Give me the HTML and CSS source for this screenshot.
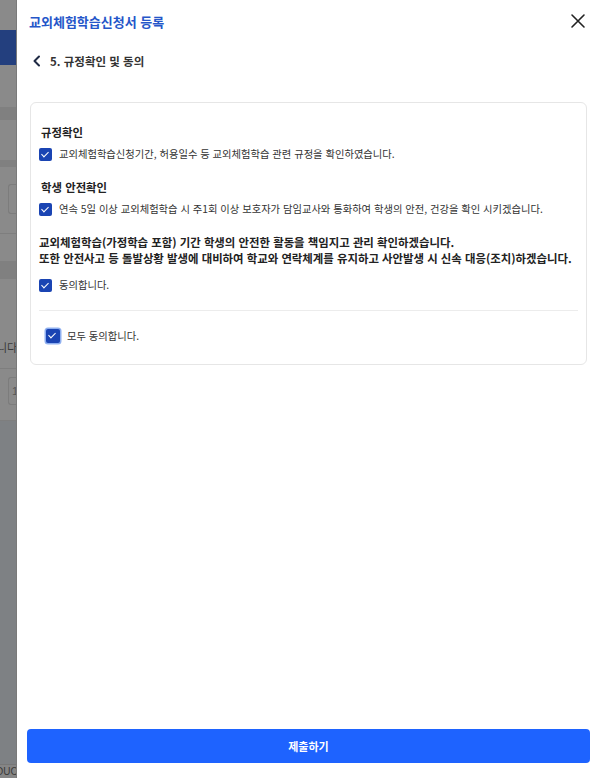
FILE: index.html
```html
<!DOCTYPE html>
<html lang="ko">
<head>
  <meta charset="UTF-8"/>
  <meta name="viewport" content="width=device-width, initial-scale=1"/>
  <title>교외체험학습신청서 등록</title>
  <link rel="stylesheet" href="styles.css">
</head>
<body>
  <div class="screen">
    <!-- dimmed page behind the drawer -->
    <div class="backdrop">
      <div class="bd-top"></div>
      <div class="bd-nav"></div>
      <div class="bd-row"></div>
      <div class="bd-band"></div>
      <div class="bd-row short"></div>
      <div class="bd-band thin"></div>
      <div class="bd-field"><span class="bd-input"></span></div>
      <div class="bd-gap"></div>
      <div class="bd-band tall"></div>
      <div class="bd-text">니다.</div>
      <div class="bd-field low"><span class="bd-input">10</span></div>
      <div class="bd-fill"></div>
      <div class="bd-foot">DUC</div>
    </div>

    <div class="drawer">
      <header class="drawer-head">
        <h1 class="drawer-title">교외체험학습신청서 등록</h1>
        <button class="icon-btn" aria-label="닫기">
          <svg width="16" height="16" viewBox="0 0 16 16"><path d="M2 2L14 14M14 2L2 14" stroke="#222" stroke-width="1.6" stroke-linecap="round"/></svg>
        </button>
      </header>

      <div class="step">
        <svg class="back" width="10" height="12" viewBox="0 0 10 12"><path d="M7 1.5L2.5 6L7 10.5" fill="none" stroke="#1f2a44" stroke-width="2" stroke-linecap="round" stroke-linejoin="round"/></svg>
        <span>5. 규정확인 및 동의</span>
      </div>

      <section class="card">
        <div class="group">
          <h2 class="group-title">규정확인</h2>
          <label class="check"><span class="box"></span>교외체험학습신청기간, 허용일수 등 교외체험학습 관련 규정을 확인하였습니다.</label>
        </div>

        <div class="group">
          <h2 class="group-title">학생 안전확인</h2>
          <label class="check"><span class="box"></span>연속 5일 이상 교외체험학습 시 주1회 이상 보호자가 담임교사와 통화하여 학생의 안전, 건강을 확인 시키겠습니다.</label>
        </div>

        <div class="group pledge">
          <p class="pledge-text">교외체험학습(가정학습 포함) 기간 학생의 안전한 활동을 책임지고 관리 확인하겠습니다.<br>또한 안전사고 등 돌발상황 발생에 대비하여 학교와 연락체계를 유지하고 사안발생 시 신속 대응(조치)하겠습니다.</p>
          <label class="check"><span class="box"></span>동의합니다.</label>
        </div>

        <div class="all">
          <label class="check all-check"><span class="box focus"></span>모두 동의합니다.</label>
        </div>
      </section>

      <div class="spacer"></div>

      <button class="submit">제출하기</button>
    </div>
  </div>
</body>
</html>
```

FILE: styles.css
```css
:root {
  --primary: #1e63ff;
  --title-blue: #2556c9;
  --check: #1a44b3;
  --text: #2b2b2b;
  --border: #e6e6e6;
}

* {
  box-sizing: border-box;
}

body {
  margin: 0;
  font-family: "Noto Sans CJK KR", "Noto Sans", sans-serif;
  color: var(--text);
  background: #fff;
}

.screen {
  display: flex;
  height: 778px;
  overflow: hidden;
}

/* backdrop */
.backdrop {
  width: 17px;
  flex: none;
  display: flex;
  flex-direction: column;
  background: #8a8a8a;
  border-right: 1px solid #7a7a7a;
  overflow: hidden;
  white-space: nowrap;
  font-family: "Liberation Sans", sans-serif;
  color: #3a3a3a;
}

.bd-top { height: 30px; }
.bd-nav { height: 35px; background: #233f7e; }
.bd-row { height: 42px; }
.bd-row.short { height: 40px; }
.bd-band { height: 13px; background: #808080; }
.bd-band.thin { height: 7px; }
.bd-band.tall { height: 18px; }
.bd-gap { height: 27px; }

.bd-field {
  height: 67px;
  padding: 17px 0 0 8px;
  border-bottom: 1px solid #7e7e7e;
}

.bd-field.low {
  height: 52px;
  padding-top: 8px;
}

.bd-input {
  display: block;
  height: 30px;
  border: 1px solid #7c7c7c;
  border-right: none;
  border-radius: 3px 0 0 3px;
  font-size: 11px;
  line-height: 28px;
  padding-left: 3px;
  color: #555;
}

.bd-field.low .bd-input {
  height: 28px;
  line-height: 26px;
}

.bd-text {
  height: 90px;
  padding-top: 60px;
  font-size: 11px;
  margin-left: -3px;
  border-bottom: 1px solid #7e7e7e;
  font-family: "Noto Sans CJK KR", sans-serif;
}

.bd-fill {
  flex: 1;
  background: #7e8184;
}

.bd-foot {
  height: 14px;
  background: #858585;
  border-top: 1px solid #777;
  font-size: 10px;
  line-height: 13px;
  margin-left: -4px;
}

/* drawer */
.drawer {
  flex: 1;
  display: flex;
  flex-direction: column;
  padding: 0 10px 15px 10px;
}

.drawer-head {
  display: flex;
  align-items: center;
  justify-content: space-between;
  height: 42px;
  padding-left: 2px;
}

.drawer-title {
  margin: 0;
  font-size: 13px;
  font-weight: 700;
  color: var(--title-blue);
}

.icon-btn {
  border: none;
  background: none;
  padding: 0;
  margin-right: 4px;
  display: flex;
}

.step {
  display: flex;
  align-items: center;
  gap: 8px;
  height: 38px;
  padding-left: 5px;
  font-size: 11.5px;
  font-weight: 700;
  color: #333;
}

.card {
  margin: 22px 3px 0 3px;
  border: 1px solid var(--border);
  border-radius: 6px;
  padding: 21px 8px 20px 8px;
}

.group {
  margin-bottom: 17px;
}

.group-title {
  margin: 0 0 6px 0;
  font-size: 11.4px;
  font-weight: 700;
  color: #222;
  padding-left: 2px;
}

.check {
  display: flex;
  align-items: center;
  gap: 7px;
  font-size: 10.3px;
  color: #333;
  line-height: 16px;
}

.box {
  width: 13px;
  height: 13px;
  flex: none;
  border-radius: 2px;
  background: var(--check);
  position: relative;
}

.box::after {
  content: "";
  position: absolute;
  left: 4px;
  top: 2px;
  width: 3px;
  height: 6px;
  border: solid #fff;
  border-width: 0 1.5px 1.5px 0;
  transform: rotate(45deg);
}

.pledge {
  margin-bottom: 0;
  padding-bottom: 17px;
  border-bottom: 1px solid #ececec;
}

.pledge-text {
  margin: 0 0 11px 0;
  font-size: 11.4px;
  font-weight: 700;
  line-height: 16px;
  color: #222;
}

.all {
  padding: 17px 0 0 7px;
}

.box.focus {
  width: 14px;
  height: 14px;
  box-shadow: 0 0 0 1.5px #8fb0f0;
}

.spacer {
  flex: 1;
}

.submit {
  height: 34px;
  border: none;
  border-radius: 4px;
  background: var(--primary);
  color: #fff;
  font-family: inherit;
  font-size: 11px;
  font-weight: 700;
}
```
